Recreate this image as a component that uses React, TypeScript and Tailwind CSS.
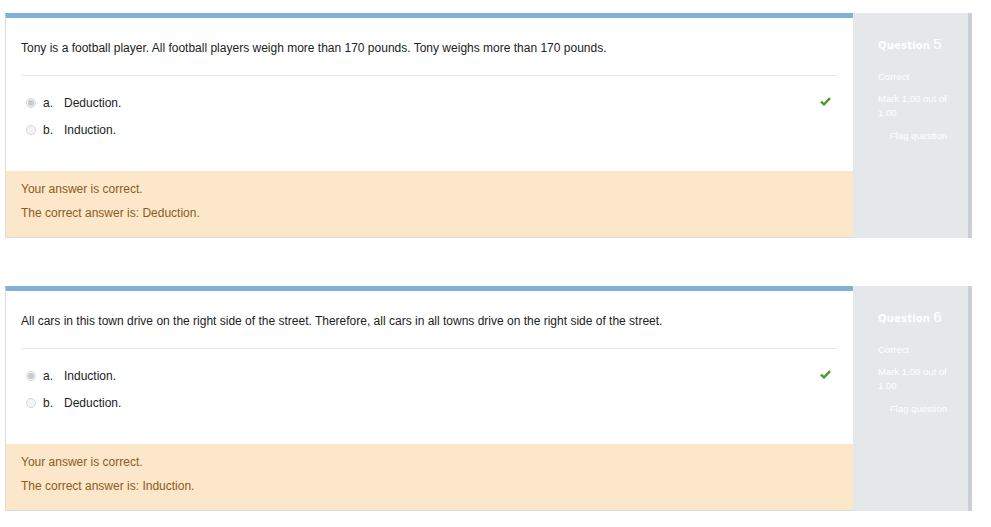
import React from 'react';

interface Question {
  number: number;
  text: string;
  options: { letter: string; label: string; checked: boolean }[];
  answer: string;
}

const questions: Question[] = [
  {
    number: 5,
    text: 'Tony is a football player. All football players weigh more than 170 pounds. Tony weighs more than 170 pounds.',
    options: [
      { letter: 'a.', label: 'Deduction.', checked: true },
      { letter: 'b.', label: 'Induction.', checked: false },
    ],
    answer: 'Deduction.',
  },
  {
    number: 6,
    text: 'All cars in this town drive on the right side of the street. Therefore, all cars in all towns drive on the right side of the street.',
    options: [
      { letter: 'a.', label: 'Induction.', checked: true },
      { letter: 'b.', label: 'Deduction.', checked: false },
    ],
    answer: 'Induction.',
  },
];

function Radio({ checked }: { checked: boolean }) {
  return (
    <span className="w-[10px] h-[10px] rounded-full border border-[#d6d6d6] bg-[#f4f4f4] flex items-center justify-center">
      {checked && <span className="w-[6px] h-[6px] rounded-full bg-[#c9c9c9]" />}
    </span>
  );
}

function Check() {
  return (
    <svg width="11" height="9" viewBox="0 0 11 9">
      <path d="M1 4.6 L4 7.4 L10 1.2" fill="none" stroke="#4a9a2c" strokeWidth="2.4" />
    </svg>
  );
}

function QuestionBlock({ q }: { q: Question }) {
  return (
    <div className="flex">
      <div className="w-[848px] border-t-[5px] border-t-[#80b2d9] border-l border-l-[#dcdcdc] border-b border-b-[#dcdcdc] flex flex-col">
        <div className="bg-white px-[15px] pt-[21px] pb-[32px]">
          <p className="text-[12px] leading-[18px] text-[#222]">{q.text}</p>
          <div className="mt-[18px] border-t border-[#e6e6e6]" />
          <div className="pt-[18px] flex flex-col gap-[9px]">
            {q.options.map((o, i) => (
              <div key={o.letter} className="flex items-center h-[18px] text-[12px] text-[#222]">
                <span className="ml-[5px] mr-[7px]"><Radio checked={o.checked} /></span>
                <span className="w-[21px]">{o.letter}</span>
                <span>{o.label}</span>
                {i === 0 && (
                  <span className="ml-auto mr-[7px] -mt-[4px]"><Check /></span>
                )}
              </div>
            ))}
          </div>
        </div>
        <div className="flex-1 bg-[#fde7cb] px-[15px] pt-[9px] pb-[15px] text-[12px] leading-[18px] text-[#8a5b1b]">
          <p>Your answer is correct.</p>
          <p className="mt-[6px]">The correct answer is: {q.answer}</p>
        </div>
      </div>
      <div className="w-[119px] bg-[#e4e8eb] border-r-[4px] border-r-[#c9cfd4] pl-[25px] pr-[20px] pt-[20px] text-white">
        <div className="flex items-baseline gap-[3px]">
          <span className="text-[10px] font-black tracking-[0.2px] font-['Verdana','DejaVu_Sans',sans-serif]">Question</span>
          <span className="text-[15px]">{q.number}</span>
        </div>
        <p className="mt-[14px] text-[9.5px] leading-[14px]">Correct</p>
        <p className="mt-[8px] text-[9.5px] leading-[14px]">Mark 1.00 out of 1.00</p>
        <p className="mt-[9px] pl-[12px] text-[9.5px] leading-[14px]">Flag question</p>
      </div>
    </div>
  );
}

export default function App() {
  return (
    <div className="w-[991px] h-[527px] bg-white overflow-hidden pl-[5px] pt-[13px] font-['Liberation_Sans',Arial,sans-serif] flex flex-col gap-[48px]">
      {questions.map(q => (
        <QuestionBlock key={q.number} q={q} />
      ))}
    </div>
  );
}
